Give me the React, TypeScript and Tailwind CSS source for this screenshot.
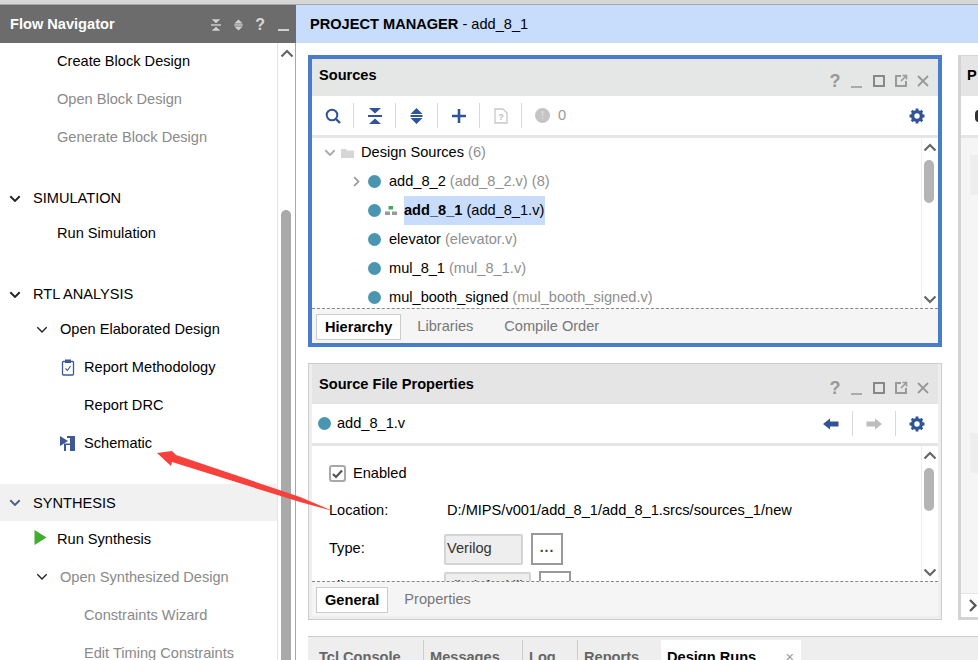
import React from 'react';

function ChevronUp({ className = 'text-[#666]' }: { className?: string }) {
  return (
    <svg width="14" height="9" viewBox="0 0 14 9" className={className}>
      <path d="M1.5 7.5 L7 2 L12.5 7.5" fill="none" stroke="currentColor" strokeWidth="2.2" />
    </svg>
  );
}

function ChevronDown({ className = 'text-[#666]', size = 14, stroke = 2.2 }: { className?: string; size?: number; stroke?: number }) {
  return (
    <svg width={size} height={size * 0.64} viewBox="0 0 14 9" className={className}>
      <path d="M1.5 1.5 L7 7 L12.5 1.5" fill="none" stroke="currentColor" strokeWidth={stroke} />
    </svg>
  );
}

function CollapseAll({ color, w = 14, h = 16 }: { color: string; w?: number; h?: number }) {
  return (
    <svg width={w} height={h} viewBox="0 0 14 16">
      <path d="M1 0H13L7 5.5Z M1 16H13L7 10.5Z" fill={color} />
      <rect x="0" y="7" width="14" height="2" fill={color} />
    </svg>
  );
}

function ExpandAll({ color, w = 13, h = 16 }: { color: string; w?: number; h?: number }) {
  return (
    <svg width={w} height={h} viewBox="0 0 13 16">
      <path d="M6.5 0L12.5 6H0.5Z M6.5 16L0.5 10H12.5Z" fill={color} />
      <rect x="0.5" y="7" width="12" height="2" fill={color} />
    </svg>
  );
}

function Gear() {
  return (
    <svg width="16" height="16" viewBox="0 0 16 16">
      <circle cx="8" cy="8" r="4.4" fill="none" stroke="#2f5597" strokeWidth="3.4" />
      <path d="M8 0.5V15.5 M0.5 8H15.5 M2.7 2.7L13.3 13.3 M13.3 2.7L2.7 13.3" stroke="#2f5597" strokeWidth="2.8" strokeDasharray="3 9.2 3 0" />
    </svg>
  );
}

function WindowButtons({ top = 'mt-[6px]' }: { top?: string }) {
  return (
    <div className={`ml-auto flex items-center gap-[6px] pr-[7px] ${top}`}>
      <span className="flex w-[16px] justify-center text-[18px] leading-none font-bold text-[#999]">?</span>
      <svg width="16" height="16" viewBox="0 0 16 16"><rect x="2" y="13" width="11" height="2" fill="#aaa" /></svg>
      <svg width="16" height="16" viewBox="0 0 16 16"><rect x="3" y="3" width="10" height="10" fill="none" stroke="#888" strokeWidth="2" /></svg>
      <svg width="16" height="16" viewBox="0 0 16 16">
        <path d="M8 3H3V13H13V8" fill="none" stroke="#999" strokeWidth="2" />
        <path d="M8 8L13 3M9.5 2.5H13.5V6.5" fill="none" stroke="#999" strokeWidth="1.5" />
      </svg>
      <svg width="16" height="16" viewBox="0 0 16 16"><path d="M3 3L13 13M13 3L3 13" stroke="#999" strokeWidth="1.8" /></svg>
    </div>
  );
}

function Dot() {
  return <span className="h-[13px] w-[13px] shrink-0 rounded-full bg-[#4a96b0]" />;
}

function Sep() {
  return <span className="block h-[25px] w-px shrink-0 bg-[#d8d8d8]" />;
}

function NavRow({ label, indent, muted, icon, height = 'h-[38px]' }: { label: string; indent: string; muted?: boolean; icon?: React.ReactNode; height?: string }) {
  return (
    <div className={`relative flex items-center ${height} ${indent} ${muted ? 'text-[#8a8a8a]' : 'text-black'}`}>
      {icon}
      {label}
    </div>
  );
}

function NavSection({ label, blue, band }: { label: string; blue?: boolean; band?: boolean }) {
  return (
    <div className={`flex h-[37px] items-center pl-[9px] text-black ${band ? 'bg-[#f1f1f1]' : ''}`}>
      <ChevronDown size={12} className={blue ? 'text-[#4a5f8c]' : 'text-[#222]'} />
      <span className={`ml-[12px] ${band ? 'mt-[3px]' : ''}`}>{label}</span>
    </div>
  );
}

function TreeRow({ name, detail }: { name: string; detail: string }) {
  return (
    <div className="flex h-[29px] items-center pl-[56px]">
      <Dot />
      <span className="ml-[8px] whitespace-nowrap text-black">{name}</span>
      <span className="ml-[4px] whitespace-nowrap text-[#8f8f8f]">{detail}</span>
    </div>
  );
}

function ScrollTrack({ thumbTop, thumbH }: { thumbTop: string; thumbH: string }) {
  return (
    <div className="relative flex w-[17px] shrink-0 flex-col items-center justify-between border-l border-[#eeeeee] pt-[5px] pb-[4px]">
      <ChevronUp />
      <div className={`absolute left-[2px] w-[10px] rounded-[5px] bg-[#b4b4b4] ${thumbTop} ${thumbH}`} />
      <ChevronDown />
    </div>
  );
}

function TabStrip({ active, tabs }: { active: string; tabs: string[] }) {
  return (
    <div className="flex h-[35px] items-center gap-[16px] border-t border-dashed border-[#888] bg-[#f5f5f5] pt-[1px] pl-[4px]">
      <span className="border border-[#cccccc] bg-white px-[8px] py-[3px] leading-[18px] font-bold text-black">{active}</span>
      {tabs.map((t, i) => (
        <span key={t} className={`text-[#777] ${i > 0 ? 'ml-[15px]' : ''}`}>{t}</span>
      ))}
    </div>
  );
}

function PropField({ label, children }: { label: string; children: React.ReactNode }) {
  return (
    <div className="flex h-[38px] shrink-0 items-center text-black">
      <span className="w-[132px] shrink-0 pl-[17px]">{label}</span>
      {children}
    </div>
  );
}

function ValueBox({ text, w, btn }: { text: string; w: string; btn: string }) {
  return (
    <div className="flex items-center gap-[8px]">
      <span className={`flex h-[31px] items-center rounded-[2px] border-2 border-[#d4d4d4] bg-[#eeeeee] pl-[1px] text-[#333] ${w}`}>{text}</span>
      <span className={`flex h-[32px] items-center justify-center border-2 border-[#999] bg-white pb-[4px] text-[14px] font-bold tracking-[1px] text-[#444] ${btn}`}>...</span>
    </div>
  );
}

export default function App() {
  return (
    <div
      className="relative flex h-[660px] w-[978px] flex-col overflow-hidden bg-white text-[14.6px]"
      style={{ fontFamily: '"Liberation Sans", Arial, sans-serif' }}
    >
      <div className="h-[5px] shrink-0 border-b border-[#a8a8a8] bg-[#d6d6d6]" />

      <div className="flex min-h-0 flex-1">
        {/* flow navigator */}
        <div className="flex w-[296px] shrink-0 flex-col">
          <div className="z-10 flex h-[38px] shrink-0 items-center bg-[#6c6c6c] pt-[2px] pl-[10px] text-white">
            <span className="font-bold">Flow Navigator</span>
            <div className="ml-auto flex items-center gap-[13px] pr-[6px]">
              <CollapseAll color="#d0d0d0" w={10} h={12} />
              <ExpandAll color="#d0d0d0" w={9} h={12} />
              <span className="-ml-[1px] text-[16px] leading-none font-bold text-[#d8d8d8]">?</span>
              <svg width="12" height="16" viewBox="0 0 12 16"><rect x="0" y="12" width="11" height="2" fill="#d0d0d0" /></svg>
            </div>
          </div>
          <div className="flex min-h-0 flex-1">
            <div className="w-[277px] shrink-0 overflow-hidden">
              <NavRow label="Create Block Design" indent="pl-[57px]" />
              <NavRow label="Open Block Design" indent="pl-[57px]" muted />
              <NavRow label="Generate Block Design" indent="pl-[57px]" muted />
              <div className="h-[23px]" />
              <NavSection label="SIMULATION" />
              <NavRow label="Run Simulation" indent="pl-[57px]" height="h-[33px]" />
              <div className="h-[26px]" />
              <NavSection label="RTL ANALYSIS" />
              <div className="relative mt-[1px] mb-[3px] flex h-[32px] items-center pl-[60px] text-black">
                <span className="absolute left-[36px] top-[12px]"><ChevronDown size={12} stroke={1.6} className="text-[#222]" /></span>
                Open Elaborated Design
              </div>
              <NavRow
                label="Report Methodology"
                indent="pl-[84px]"
                icon={
                  <svg className="absolute left-[61px] top-[10px]" width="14" height="17" viewBox="0 0 14 17">
                    <rect x="1.5" y="2.5" width="11" height="13.5" rx="1" fill="none" stroke="#3d5a94" strokeWidth="1.3" />
                    <rect x="4" y="0.5" width="6" height="3.5" fill="#3d5a94" />
                    <path d="M4.5 9.5L6.5 11.5L9.5 7" fill="none" stroke="#3d5a94" strokeWidth="1.1" />
                  </svg>
                }
              />
              <NavRow label="Report DRC" indent="pl-[84px]" />
              <NavRow
                label="Schematic"
                indent="pl-[84px]"
                icon={
                  <svg className="absolute left-[60px] top-[11px]" width="15" height="15" viewBox="0 0 15 15">
                    <path d="M0 0L8 5L0 10Z" fill="#3d5a94" />
                    <path d="M7 0H15V15H10V9H6V15H4V7.5H10V2H7Z" fill="#3d5a94" />
                  </svg>
                }
              />
              <div className="h-[21px]" />
              <NavSection label="SYNTHESIS" blue band />
              <NavRow
                label="Run Synthesis"
                indent="pt-[2px] pl-[57px]"
                height="h-[36px]"
                icon={
                  <svg className="absolute left-[34px] top-[9px]" width="13" height="15" viewBox="0 0 13 15">
                    <path d="M0.5 0L12.5 7.5L0.5 15Z" fill="#3fae2a" />
                  </svg>
                }
              />
              <div className="relative mt-[2px] flex h-[38px] items-center pl-[60px] text-[#8a8a8a]">
                <span className="absolute left-[36px] top-[14px]"><ChevronDown size={12} stroke={1.6} className="text-[#222]" /></span>
                Open Synthesized Design
              </div>
              <NavRow label="Constraints Wizard" indent="pl-[84px]" muted />
              <NavRow label="Edit Timing Constraints" indent="pl-[84px]" muted />
            </div>
            <div className="relative w-[19px] shrink-0 border-r border-l border-r-[#a8a8a8] border-l-[#e4e4e4]">
              <span className="absolute left-[2px] top-[6px]"><ChevronUp /></span>
              <div className="absolute left-[3px] top-[167px] h-[460px] w-[10px] rounded-t-[5px] bg-[#a9a9a9]" />
            </div>
          </div>
        </div>

        {/* project manager */}
        <div className="flex min-w-0 flex-1 flex-col">
          <div className="flex h-[38px] shrink-0 items-center bg-[#c8dcfb] pt-[2px] pl-[14px] text-black">
            <span className="font-bold">PROJECT MANAGER</span>
            <span className="ml-[4px]">- add_8_1</span>
          </div>

          <div className="flex min-h-0 flex-1 gap-[16px] pt-[12px] pl-[12px]">
            <div className="flex w-[634px] shrink-0 flex-col">
              {/* sources */}
              <div className="flex h-[292px] shrink-0 flex-col border-4 border-[#4a7cce]">
                <div className="flex h-[37px] shrink-0 items-center bg-[#e5e6e6] pl-[7px]">
                  <span className="mb-[3px] font-bold text-black">Sources</span>
                  <WindowButtons />
                </div>
                <div className="flex h-[42px] shrink-0 items-center border-b-[3px] border-[#e5e5e5]">
                  <span className="flex w-[41px] justify-center">
                    <svg width="16" height="16" viewBox="0 0 16 16">
                      <circle cx="7" cy="7" r="5.3" fill="none" stroke="#2f5597" strokeWidth="2" />
                      <path d="M10.5 10.5L15 15" stroke="#2f5597" strokeWidth="2.4" />
                    </svg>
                  </span>
                  <Sep />
                  <span className="flex w-[41px] justify-center"><CollapseAll color="#2f5597" /></span>
                  <Sep />
                  <span className="flex w-[41px] justify-center"><ExpandAll color="#2f5597" /></span>
                  <Sep />
                  <span className="flex w-[41px] justify-center">
                    <svg width="16" height="16" viewBox="0 0 16 16"><path d="M8 1V15M1 8H15" stroke="#2f5597" strokeWidth="2.6" /></svg>
                  </span>
                  <Sep />
                  <span className="flex w-[41px] justify-center">
                    <svg width="14" height="16" viewBox="0 0 14 16">
                      <path d="M1 1H9L13 5V15H1Z" fill="none" stroke="#c8c8c8" strokeWidth="1.3" />
                      <text x="7" y="12" textAnchor="middle" fontSize="9" fontWeight="bold" fill="#bbbbbb">?</text>
                    </svg>
                  </span>
                  <Sep />
                  <span className="ml-[13px] flex h-[15px] w-[15px] items-center justify-center rounded-full bg-[#c4c4c4] text-[10px] font-bold text-[#dddddd]">!</span>
                  <span className="ml-[8px] text-[#999]">0</span>
                  <span className="mr-[13px] ml-auto"><Gear /></span>
                </div>
                <div className="flex h-[170px] shrink-0 overflow-hidden">
                  <div className="min-w-0 flex-1 overflow-hidden">
                    <div className="flex h-[29px] items-center pl-[12px]">
                      <ChevronDown size={12} className="text-[#aaa]" />
                      <svg className="ml-[5px]" width="14" height="12" viewBox="0 0 14 12">
                        <path d="M0 2H5L6 3.5H13V11H0Z" fill="#d6d6d6" />
                      </svg>
                      <span className="ml-[6px] text-black">Design Sources</span>
                      <span className="ml-[4px] text-[#8f8f8f]">(6)</span>
                    </div>
                    <div className="relative">
                      <span className="absolute left-[39px] top-[11px] rotate-[-90deg]"><ChevronDown size={11} className="text-[#999]" /></span>
                      <TreeRow name="add_8_2" detail="(add_8_2.v) (8)" />
                    </div>
                    <div className="flex h-[29px] items-center pl-[56px]">
                      <Dot />
                      <svg className="ml-[4px]" width="12" height="9" viewBox="0 0 12 9">
                        <rect x="3.5" y="0" width="4.5" height="3.5" fill="#3fae5a" />
                        <rect x="0" y="5.5" width="5" height="3.5" fill="#999" />
                        <rect x="7" y="5.5" width="5" height="3.5" fill="#999" />
                      </svg>
                      <span className="ml-[7px] flex h-[29px] items-center bg-[#c8dcfb] pr-[1px] whitespace-nowrap text-black">
                        <b>add_8_1</b>
                        <span className="ml-[4px]">(add_8_1.v)</span>
                      </span>
                    </div>
                    <TreeRow name="elevator" detail="(elevator.v)" />
                    <TreeRow name="mul_8_1" detail="(mul_8_1.v)" />
                    <TreeRow name="mul_booth_signed" detail="(mul_booth_signed.v)" />
                  </div>
                  <ScrollTrack thumbTop="top-[22px]" thumbH="h-[43px]" />
                </div>
                <TabStrip active="Hierarchy" tabs={['Libraries', 'Compile Order']} />
              </div>

              <div className="h-[16px] shrink-0" />

              {/* source file properties */}
              <div className="flex h-[257px] shrink-0 flex-col border border-[#cccccc] bg-[#eeeeee] pr-[3px] pb-[3px] pl-[3px]">
                <div className="flex h-[40px] shrink-0 items-center bg-[#e5e5e5] pl-[7px]">
                  <span className="mt-[1px] font-bold text-black">Source File Properties</span>
                  <WindowButtons top="mt-[8px]" />
                </div>
                <div className="flex h-[42px] shrink-0 items-center border-b-[3px] border-[#e5e5e5] bg-white pl-[6px]">
                  <Dot />
                  <span className="ml-[6px] text-black">add_8_1.v</span>
                  <div className="ml-auto flex items-center">
                    <svg width="16" height="12" viewBox="0 0 16 12"><path d="M0 6L7 0.5V3.5H15.5V8.5H7V11.5Z" fill="#2f5597" /></svg>
                    <span className="mx-[13px]"><Sep /></span>
                    <svg width="16" height="12" viewBox="0 0 16 12"><path d="M16 6L9 0.5V3.5H0.5V8.5H9V11.5Z" fill="#bdbdbd" /></svg>
                    <span className="mx-[13px]"><Sep /></span>
                    <span className="mr-[13px]"><Gear /></span>
                  </div>
                </div>
                <div className="flex h-[135px] shrink-0 overflow-hidden bg-white">
                  <div className="flex min-w-0 flex-1 flex-col overflow-hidden pt-[9px]">
                    <div className="flex h-[37px] shrink-0 items-center pl-[17px] text-black">
                      <span className="flex h-[17px] w-[17px] items-center justify-center rounded-[3px] border-2 border-[#a8a8a8]">
                        <svg width="11" height="10" viewBox="0 0 11 10"><path d="M1 5L4 8L10 1.5" fill="none" stroke="#555" strokeWidth="2.2" /></svg>
                      </span>
                      <span className="ml-[7px]">Enabled</span>
                    </div>
                    <PropField label="Location:">
                      <span className="ml-[3px] whitespace-nowrap">D:/MIPS/v001/add_8_1/add_8_1.srcs/sources_1/new</span>
                    </PropField>
                    <PropField label="Type:">
                      <ValueBox text="Verilog" w="w-[79px]" btn="w-[32px]" />
                    </PropField>
                    <PropField label="Library:">
                      <ValueBox text="xil_defaultlib" w="w-[87px]" btn="w-[32px]" />
                    </PropField>
                  </div>
                  <ScrollTrack thumbTop="top-[22px]" thumbH="h-[43px]" />
                </div>
                <TabStrip active="General" tabs={['Properties']} />
              </div>

              <div className="h-[16px] shrink-0" />

              {/* bottom tabs */}
              <div className="w-[670px] flex-1 border-t border-[#cccccc] bg-[#eeeeee] pt-[3px] pl-[3px]">
                <div className="flex h-[30px] font-bold text-[#666]">
                  <span className="flex h-full w-[113px] border-r border-[#cccccc] pt-[9px] pl-[8px] leading-[17px]">Tcl Console</span>
                  <span className="flex h-full w-[99px] border-r border-[#cccccc] pt-[9px] pl-[6px] leading-[17px]">Messages</span>
                  <span className="flex h-full w-[55px] border-r border-[#cccccc] pt-[9px] pl-[6px] leading-[17px]">Log</span>
                  <span className="flex h-full w-[83px] pt-[9px] pl-[6px] leading-[17px]">Reports</span>
                  <span className="flex h-full w-[140px] bg-white pt-[9px] pl-[6px] leading-[17px] text-black">
                    Design Runs
                    <span className="ml-auto pr-[7px] font-normal text-[#999]">×</span>
                  </span>
                </div>
              </div>
            </div>

            {/* cut off panel on the right */}
            <div className="flex h-[565px] min-w-0 flex-1 flex-col overflow-hidden border-t border-b-[3px] border-l-[3px] border-[#d4d4d4]">
              <div className="flex h-[40px] shrink-0 items-center bg-[#e5e5e5] pl-[6px] font-bold text-black">P</div>
              <div className="flex h-[42px] shrink-0 items-center border-b-[3px] border-[#e5e5e5] pl-[14px]">
                <span className="h-[12px] w-[8px] rounded-l-full border-2 border-[#333]" />
              </div>
              <div className="flex min-h-0 flex-1 flex-col justify-start gap-[238px] bg-[#f5f5f5] pt-[17px] pl-[9px]">
                <div className="h-[40px] bg-[#eeeeee]" />
                <div className="h-[40px] bg-[#eeeeee]" />
              </div>
              <div className="flex h-[24px] shrink-0 items-center border-t border-[#e5e5e5] bg-white pl-[5px]">
                <span className="rotate-[-90deg]"><ChevronUp className="rotate-180 text-[#555]" /></span>
              </div>
            </div>
          </div>
        </div>
      </div>

      {/* annotation arrow drawn over the screenshot */}
      <svg className="pointer-events-none absolute top-0 left-0" width="978" height="660" viewBox="0 0 978 660">
        <path d="M157 453L172 451L176 455L300 497L333 511L300 502L172 462L171 466Z" fill="#f8413c" />
      </svg>
    </div>
  );
}
